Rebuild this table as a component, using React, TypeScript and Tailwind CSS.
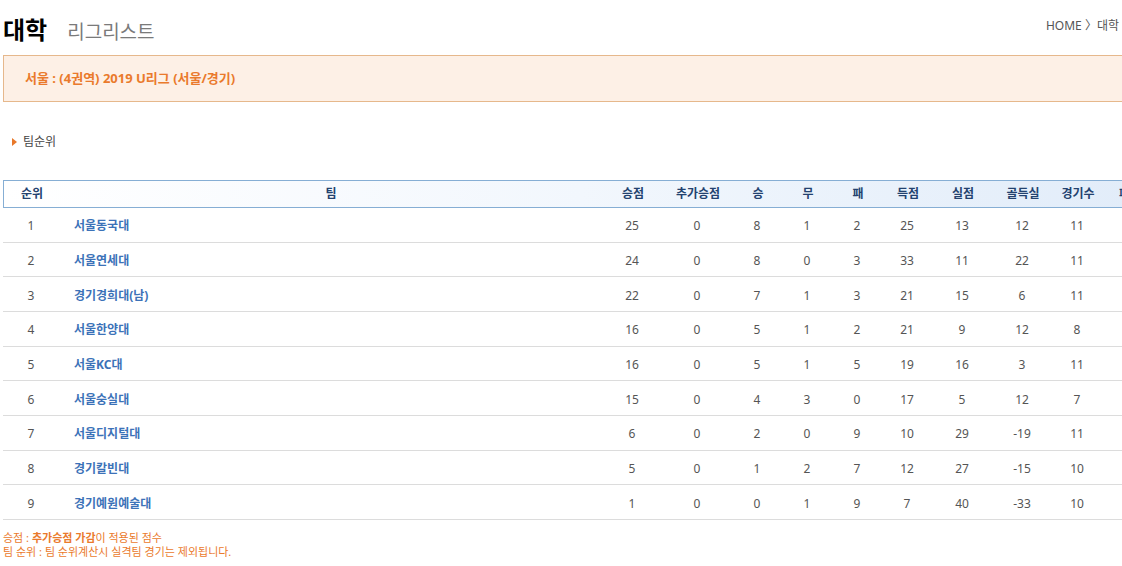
import React from "react";

interface Row {
  rank: number;
  team: string;
  pts: number;
  extra: number;
  w: number;
  d: number;
  l: number;
  gf: number;
  ga: number;
  gd: number;
  gp: number;
}

const rows: Row[] = [
  { rank: 1, team: "서울동국대", pts: 25, extra: 0, w: 8, d: 1, l: 2, gf: 25, ga: 13, gd: 12, gp: 11 },
  { rank: 2, team: "서울연세대", pts: 24, extra: 0, w: 8, d: 0, l: 3, gf: 33, ga: 11, gd: 22, gp: 11 },
  { rank: 3, team: "경기경희대(남)", pts: 22, extra: 0, w: 7, d: 1, l: 3, gf: 21, ga: 15, gd: 6, gp: 11 },
  { rank: 4, team: "서울한양대", pts: 16, extra: 0, w: 5, d: 1, l: 2, gf: 21, ga: 9, gd: 12, gp: 8 },
  { rank: 5, team: "서울KC대", pts: 16, extra: 0, w: 5, d: 1, l: 5, gf: 19, ga: 16, gd: 3, gp: 11 },
  { rank: 6, team: "서울숭실대", pts: 15, extra: 0, w: 4, d: 3, l: 0, gf: 17, ga: 5, gd: 12, gp: 7 },
  { rank: 7, team: "서울디지털대", pts: 6, extra: 0, w: 2, d: 0, l: 9, gf: 10, ga: 29, gd: -19, gp: 11 },
  { rank: 8, team: "경기칼빈대", pts: 5, extra: 0, w: 1, d: 2, l: 7, gf: 12, ga: 27, gd: -15, gp: 10 },
  { rank: 9, team: "경기예원예술대", pts: 1, extra: 0, w: 0, d: 1, l: 9, gf: 7, ga: 40, gd: -33, gp: 10 },
];

const cols =
  "grid grid-cols-[56px_542px_62px_68px_52px_48px_52px_48px_62px_58px_52px_60px]";

const heads = ["승점", "추가승점", "승", "무", "패", "득점", "실점", "골득실", "경기수"];

export default function App() {
  return (
    <div className="w-[1122px] h-[566px] overflow-hidden bg-white font-['Noto_Sans','Noto_Sans_CJK_KR',sans-serif]">
      <div className="w-[1160px] pl-[3px]">
        <div className="flex items-end justify-between h-[42px] w-[1116px]">
          <div className="flex items-baseline">
            <h1 className="text-[24px] font-bold text-black leading-none">대학</h1>
            <span className="ml-[20px] text-[19px] text-[#7a7a7a] leading-none">리그리스트</span>
          </div>
          <div className="text-[12px] text-[#555] pb-[10px] leading-none">HOME 〉대학</div>
        </div>

        <div className="mt-[13px] h-[47px] border border-[#e6b88c] bg-[#fdf0e6] flex items-center pl-[21px]">
          <span className="text-[13px] font-bold text-[#ea7a2c]">서울 : (4권역) 2019 U리그 (서울/경기)</span>
        </div>

        <div className="mt-[32px] flex items-center pl-[9px] h-[16px]">
          <span className="w-0 h-0 border-y-[4px] border-y-transparent border-l-[5px] border-l-[#e8782a] mr-[6px]" />
          <span className="text-[12px] text-[#444]">팀순위</span>
        </div>

        <div className="mt-[30px]">
          <div
            className={`${cols} h-[28px] items-center border-y border-[#86aed4] border-l bg-gradient-to-r from-white via-[#f2f7fd] to-[#e1ecf9] text-[12px] font-bold text-[#23426f]`}
          >
            <div className="text-center">순위</div>
            <div className="text-center">팀</div>
            {heads.map((h) => (
              <div key={h} className="text-center">
                {h}
              </div>
            ))}
            <div className="pl-[15px] whitespace-nowrap">페어</div>
          </div>
          {rows.map((r) => (
            <div
              key={r.rank}
              className={`${cols} h-[34.67px] pt-[3px] items-center border-b border-[#dcdcdc] text-[12px] text-[#555]`}
            >
              <div className="text-center">{r.rank}</div>
              <div className="pl-[15px] font-bold text-[#3c72b8]">{r.team}</div>
              <div className="text-center">{r.pts}</div>
              <div className="text-center">{r.extra}</div>
              <div className="text-center">{r.w}</div>
              <div className="text-center">{r.d}</div>
              <div className="text-center">{r.l}</div>
              <div className="text-center">{r.gf}</div>
              <div className="text-center">{r.ga}</div>
              <div className="text-center">{r.gd}</div>
              <div className="text-center">{r.gp}</div>
              <div />
            </div>
          ))}
        </div>

        <div className="mt-[11px] text-[11px] leading-[14px] text-[#ea7a2c]">
          <p>
            승점 : <b>추가승점 가감</b>이 적용된 점수
          </p>
          <p>팀 순위 : 팀 순위계산시 실격팀 경기는 제외됩니다.</p>
        </div>
      </div>
    </div>
  );
}
